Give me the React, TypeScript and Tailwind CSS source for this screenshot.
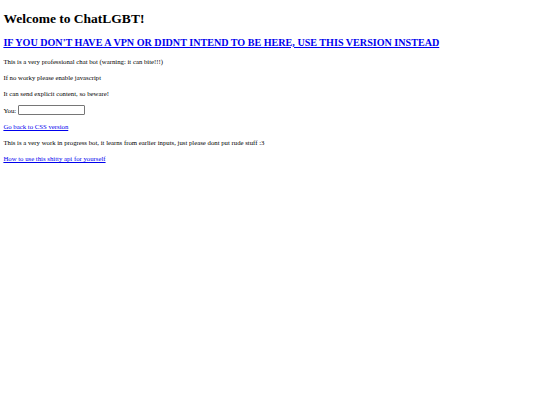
export default function App() {
  return (
    <div className="m-[3.4px] font-['Liberation_Serif','Times_New_Roman',serif] text-[6.75px] leading-[9px] text-black">
      <h1 className="text-[13.5px] leading-[17px] font-bold mt-[10px] mb-[9px]">Welcome to ChatLGBT!</h1>
      <h2 className="text-[10.1px] leading-[13px] font-bold my-[8px]">
        <a href="#" className="text-[#0000ee] underline">
          IF YOU DON'T HAVE A VPN OR DIDNT INTEND TO BE HERE, USE THIS VERSION INSTEAD
        </a>
      </h2>
      <p className="my-[7px]">This is a very professional chat bot (warning: it can bite!!!)</p>
      <p className="my-[7px]">If no worky please enable javascript</p>
      <p className="my-[7px]">It can send explicit content, so beware!</p>
      <p className="my-[7px] flex items-center">
        You:
        <input
          type="text"
          className="ml-[1.5px] w-[67px] h-[10px] border border-[#767676] rounded-[1px] bg-white text-[6px] px-[1px]"
        />
      </p>
      <p className="my-[7px]">
        <a href="#" className="text-[#0000ee] underline">Go back to CSS version</a>
      </p>
      <p className="my-[7px]">
        This is a very work in progress bot, it learns from earlier inputs, just please dont put rude stuff :3
      </p>
      <p className="my-[7px]">
        <a href="#" className="text-[#0000ee] underline">How to use this shitty api for yourself</a>
      </p>
    </div>
  )
}
